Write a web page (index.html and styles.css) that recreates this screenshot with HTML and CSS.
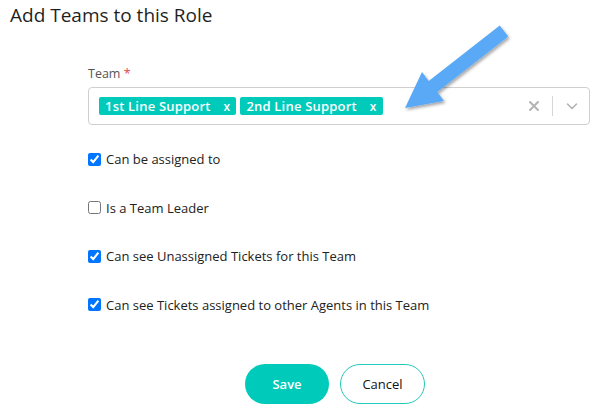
FILE: index.html
```html
<!DOCTYPE html>
<html lang="en">
<head>
<meta charset="utf-8">
<title>Add Teams to this Role</title>
<link rel="stylesheet" href="styles.css">
</head>
<body>
<div class="page">
  <h1 class="title">Add Teams to this Role</h1>
  <form class="form">
    <div class="field-label">Team <span class="req">*</span></div>
    <div class="select">
      <div class="tags">
        <span class="tag">1st Line Support <span class="tag-x">x</span></span>
        <span class="tag">2nd Line Support <span class="tag-x">x</span></span>
      </div>
      <div class="indicators">
        <svg class="clear" width="14" height="14" viewBox="0 0 14 14"><path d="M3 3 L11 11 M11 3 L3 11" stroke="#b3b3b3" stroke-width="2" stroke-linecap="round"/></svg>
        <span class="sep"></span>
        <svg class="chev" width="14" height="14" viewBox="0 0 14 14"><path d="M2.5 5 L7 9.5 L11.5 5" fill="none" stroke="#b3b3b3" stroke-width="1.6" stroke-linecap="round" stroke-linejoin="round"/></svg>
      </div>
    </div>
    <div class="checks">
      <label class="check"><input type="checkbox" checked><span>Can be assigned to</span></label>
      <label class="check"><input type="checkbox"><span>Is a Team Leader</span></label>
      <label class="check"><input type="checkbox" checked><span>Can see Unassigned Tickets for this Team</span></label>
      <label class="check"><input type="checkbox" checked><span>Can see Tickets assigned to other Agents in this Team</span></label>
    </div>
    <div class="actions">
      <button type="button" class="btn btn-save">Save</button>
      <button type="button" class="btn btn-cancel">Cancel</button>
    </div>
  </form>
  <svg class="arrow" width="600" height="140" viewBox="0 0 600 140">
    <defs>
      <filter id="sh" x="-20%" y="-20%" width="140%" height="140%">
        <feDropShadow dx="1.5" dy="2" stdDeviation="1.8" flood-color="#000" flood-opacity="0.35"/>
      </filter>
    </defs>
    <polygon points="499.7,25.5 508.3,36.5 437.3,92 444,101 405,108 422,72 428.7,81" fill="#5aa9f6" filter="url(#sh)"/>
  </svg>
</div>
</body>
</html>
```
FILE: styles.css
```css
html, body {
  margin: 0;
  padding: 0;
  background: #ffffff;
}
body {
  font-family: "Open Sans", "Noto Sans", sans-serif;
  color: #222;
}
.page {
  position: relative;
  width: 600px;
  height: 419px;
}
.title {
  margin: 0;
  padding: 3px 0 0 10px;
  font-size: 19px;
  font-weight: 400;
  line-height: 24px;
  color: #1f1f1f;
}
.form {
  margin: 38px 0 0 88px;
  width: 502px;
}
.field-label {
  font-size: 12.5px;
  line-height: 18px;
  color: #555;
}
.req {
  color: #e5484d;
}
.select {
  margin-top: 4px;
  box-sizing: border-box;
  height: 38px;
  border: 1px solid #cfcfcf;
  border-radius: 4px;
  display: flex;
  align-items: center;
  padding-left: 10px;
}
.tags {
  display: flex;
  gap: 4px;
  flex: 1;
}
.tag {
  display: inline-flex;
  align-items: center;
  height: 18px;
  padding: 0 6px;
  background: #00cbbb;
  border-radius: 2px;
  color: #fff;
  font-size: 13px;
  font-weight: 600;
  letter-spacing: 0.2px;
}
.tag-x {
  margin-left: 13px;
  font-size: 12px;
}
.indicators {
  display: flex;
  align-items: center;
  height: 100%;
}
.clear {
  margin-right: 11px;
}
.sep {
  width: 1px;
  height: 20px;
  background: #d6d6d6;
}
.chev {
  margin: 0 10px 0 12px;
}
.checks {
  margin-top: 10px;
  display: flex;
  flex-direction: column;
}
.check {
  display: flex;
  align-items: center;
  height: 48.5px;
  font-size: 13px;
  color: #222;
}
.check input {
  margin: 0 5px 0 0;
  width: 13px;
  height: 13px;
}
.actions {
  margin-top: 35px;
  display: flex;
  justify-content: center;
  gap: 11px;
  padding-right: 8px;
}
.btn {
  height: 40px;
  border-radius: 20px;
  font-family: inherit;
  font-size: 13px;
  cursor: pointer;
}
.btn-save {
  width: 84px;
  border: none;
  background: #00cbbb;
  color: #fff;
  font-weight: 600;
}
.btn-cancel {
  width: 85px;
  border: 1px solid #22cbbd;
  background: #fff;
  color: #111;
}
.arrow {
  position: absolute;
  left: 0;
  top: 0;
  pointer-events: none;
}
```
